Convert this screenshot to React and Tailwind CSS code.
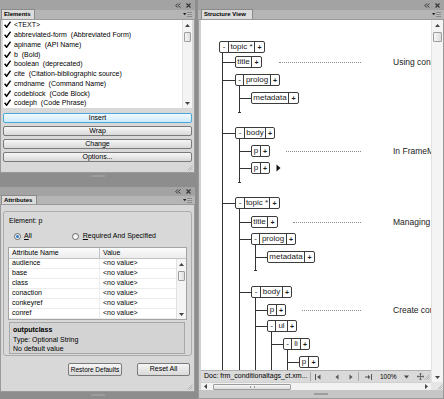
import React from "react";

const elements = [
  "<TEXT>",
  "abbreviated-form  (Abbreviated Form)",
  "apiname  (API Name)",
  "b  (Bold)",
  "boolean  (deprecated)",
  "cite  (Citation-bibliographic source)",
  "cmdname  (Command Name)",
  "codeblock  (Code Block)",
  "codeph  (Code Phrase)",
];

const attrs = ["audience", "base", "class", "conaction", "conkeyref", "conref"];

const OX = 201;
const OY = 20;

const nodes = [
  { x: 219, y: 41, parts: [["-", 8], ["topic *", 26], ["+", 10]] },
  { x: 235, y: 56, parts: [["title", 15], ["+", 10]] },
  { x: 235, y: 74, parts: [["-", 7], ["prolog", 27], ["+", 9]] },
  { x: 251, y: 92, parts: [["metadata", 36], ["+", 10]] },
  { x: 235, y: 127, parts: [["-", 8], ["body", 21], ["+", 9]] },
  { x: 251, y: 145, parts: [["p", 8], ["+", 9]] },
  { x: 251, y: 162, parts: [["p", 8], ["+", 9]] },
  { x: 235, y: 197, parts: [["-", 8], ["topic *", 25], ["+", 10]] },
  { x: 251, y: 216, parts: [["title", 15], ["+", 10]] },
  { x: 251, y: 233, parts: [["-", 7], ["prolog", 27], ["+", 9]] },
  { x: 267, y: 251, parts: [["metadata", 36], ["+", 10]] },
  { x: 251, y: 286, parts: [["-", 8], ["body", 22], ["+", 9]] },
  { x: 267, y: 304, parts: [["p", 8], ["+", 9]] },
  { x: 267, y: 320, parts: [["-", 7], ["ul", 12], ["+", 9]] },
  { x: 283, y: 338, parts: [["-", 7], ["li", 9], ["+", 9]] },
  { x: 299, y: 356, parts: [["p", 8], ["+", 10]] },
];

const vlines = [
  [222, 53, 372, false],
  [239, 86, 112, true],
  [239, 139, 182, true],
  [239, 209, 372, false],
  [255, 245, 270, true],
  [255, 298, 372, false],
  [271, 332, 372, false],
  [287, 350, 372, false],
];

const hlines = [
  [222, 235, 62],
  [222, 235, 80],
  [239, 251, 98],
  [222, 235, 133],
  [239, 251, 151],
  [239, 251, 168],
  [222, 235, 203],
  [239, 251, 222],
  [239, 251, 239],
  [255, 267, 257],
  [239, 251, 292],
  [255, 267, 310],
  [255, 267, 326],
  [271, 283, 344],
  [287, 299, 362],
];

const dotted = [
  [279, 361, 62, "Using conditional text"],
  [286, 361, 151, "In FrameMaker, conditional"],
  [293, 361, 222, "Managing conditional tags"],
  [302, 361, 310, "Create conditional tags"],
];

function Check() {
  return (
    <svg width="7" height="7" viewBox="0 0 7 7" className="shrink-0">
      <path d="M0.6 3.8 L2.6 6.2 L6.6 0.6" stroke="#000" strokeWidth="1.5" fill="none" />
    </svg>
  );
}

function DblArrow() {
  return (
    <svg width="6" height="5" viewBox="0 0 6 5">
      <path d="M2.8 0.5 L0.8 2.5 L2.8 4.5 M5.3 0.5 L3.3 2.5 L5.3 4.5" stroke="#333" fill="none" strokeWidth="1" />
    </svg>
  );
}

function CloseX() {
  return (
    <svg width="5" height="5" viewBox="0 0 5 5">
      <path d="M0.5 0.5 L4.5 4.5 M4.5 0.5 L0.5 4.5" stroke="#333" strokeWidth="1.1" />
    </svg>
  );
}

function MenuIcon() {
  return (
    <svg width="9" height="5" viewBox="0 0 9 5">
      <path d="M0 1 L3.4 1 L1.7 3.2 Z" fill="#222" />
      <rect x="4" y="0" width="5" height="5" fill="#8a8a8a" />
      <path d="M4 1.5 H9 M4 3.5 H9" stroke="#c8c8c8" strokeWidth="0.8" />
    </svg>
  );
}

function Grip() {
  return (
    <svg width="6" height="6" viewBox="0 0 6 6">
      <path d="M5.5 0.5 L0.5 5.5 M5.5 2.5 L2.5 5.5 M5.5 4.5 L4.5 5.5" stroke="#a8a8a8" strokeWidth="0.8" />
    </svg>
  );
}

function UpArrow() {
  return (
    <svg width="5" height="3" viewBox="0 0 5 3">
      <path d="M0 3 L2.5 0 L5 3 Z" fill="#444" />
    </svg>
  );
}

function DownArrow() {
  return (
    <svg width="5" height="3" viewBox="0 0 5 3">
      <path d="M0 0 L2.5 3 L5 0 Z" fill="#444" />
    </svg>
  );
}

function VScroll() {
  return (
    <div className="h-full flex flex-col bg-[#f4f4f4] border-l border-[#e2e2e2]">
      <div className="h-[10px] flex items-center justify-center">
        <UpArrow />
      </div>
      <div className="mt-[2px] mx-[1px] h-[10px] rounded-[1px] border border-[#9d9d9d] bg-gradient-to-r from-[#f6f6f6] to-[#dedede]" />
      <div className="flex-1" />
      <div className="h-[10px] flex items-center justify-center">
        <DownArrow />
      </div>
    </div>
  );
}

function Header({ label, tabClass }) {
  return (
    <>
      <div className="h-[10px] bg-[#a3a3a3] flex items-center justify-end gap-[5px] pr-[4px] shrink-0">
        <DblArrow />
        <CloseX />
      </div>
      <div className="h-[10px] bg-[#b5b5b5] flex items-end shrink-0 border-b border-[#9a9a9a]">
        <div className={tabClass}>{label}</div>
        <div className="ml-auto mr-[3px] self-center flex">
          <MenuIcon />
        </div>
      </div>
    </>
  );
}

function Button({ children, active, className }) {
  const base = "flex items-center justify-center whitespace-nowrap text-[#000] rounded-[2px] border bg-gradient-to-b ";
  const tone = active
    ? "border-[#4aa9dc] from-[#f2fafe] to-[#cdeafb]"
    : "border-[#7a7a7a] from-[#f6f6f6] to-[#d9d9d9]";
  return <div className={base + tone + " " + (className || "")}>{children}</div>;
}

function Handle({ className }) {
  return (
    <div className={"flex items-center justify-center shrink-0 " + className}>
      <div className="w-[14px] h-[2px] bg-[#b4b4b4] border-y border-[#9c9c9c]" />
    </div>
  );
}

function ElementsPanel() {
  return (
    <div className="h-[173px] flex flex-col shrink-0">
      <Header
        label="Elements"
        tabClass="w-[34px] h-[10px] ml-[1px] bg-[#dcdcdc] border-t border-x border-[#8a8a8a] text-[6px] font-bold leading-[9px] pl-[2px]"
      />
      <div className="flex-1 relative bg-[#d8d8d8] border-x border-b border-[#9a9a9a] px-[2px] flex flex-col">
        <div className="h-[88px] bg-white flex shrink-0">
          <div className="flex-1 flex flex-col">
            {elements.map((t) => (
              <div key={t} className="h-[9.75px] flex items-center gap-[3px] pl-[1px] text-[7px] leading-none whitespace-pre text-[#000]">
                <Check />
                <span>{t}</span>
              </div>
            ))}
          </div>
          <div className="w-[10px]">
            <VScroll />
          </div>
        </div>
        <div className="mt-[5px] flex flex-col gap-[3px]">
          <Button active className="h-[10px] text-[7px]">Insert</Button>
          <Button className="h-[10px] text-[7px]">Wrap</Button>
          <Button className="h-[10px] text-[7px]">Change</Button>
          <Button className="h-[10px] text-[7px]">Options...</Button>
        </div>
        <div className="absolute right-[1px] bottom-[1px] flex">
          <Grip />
        </div>
      </div>
    </div>
  );
}

function Radio({ on }) {
  return (
    <div className="w-[7px] h-[7px] rounded-full border border-[#6b6b6b] bg-gradient-to-b from-[#e8e8e8] to-[#ffffff] flex items-center justify-center shrink-0">
      {on ? <div className="w-[3px] h-[3px] rounded-full bg-[#2c78c8]" /> : null}
    </div>
  );
}

function AttributesPanel() {
  return (
    <div className="h-[205px] flex flex-col shrink-0">
      <div className="h-[9px] bg-[#a3a3a3] flex items-center justify-end gap-[5px] pr-[4px] shrink-0">
        <DblArrow />
        <CloseX />
      </div>
      <div className="h-[9px] bg-[#b5b5b5] flex items-end shrink-0 border-b border-[#9a9a9a]">
        <div className="w-[36px] h-[9px] ml-[1px] bg-[#dcdcdc] border-t border-x border-[#8a8a8a] text-[6px] font-bold leading-[8px] pl-[2px]">
          Attributes
        </div>
        <div className="ml-auto mr-[3px] self-center flex">
          <MenuIcon />
        </div>
      </div>
      <div className="flex-1 relative bg-[#d8d8d8] border-x border-b border-[#9a9a9a] px-[2px] flex flex-col">
        <div className="mt-[6px] h-[145px] border border-[#acacac] rounded-[3px] px-[4px] flex flex-col shrink-0">
          <div className="mt-[4px] h-[10px] flex items-center pl-[1px] text-[7px] text-[#000]">Element: p</div>
          <div className="mt-[5px] h-[10px] flex items-center text-[7px] text-[#000]">
            <div className="ml-[6px]">
              <Radio on />
            </div>
            <span className="ml-[3px]">
              <span className="underline">A</span>ll
            </span>
            <div className="ml-[40px]">
              <Radio />
            </div>
            <span className="ml-[4px]">
              <span className="underline">R</span>equired And Specified
            </span>
          </div>
          <div className="mt-[6px] border border-[#a4a4a4] bg-white flex flex-col shrink-0">
            <div className="h-[11px] flex text-[7px] text-[#000] bg-gradient-to-b from-[#fbfbfb] to-[#ececec] border-b border-[#c4c4c4]">
              <div className="w-[91px] pl-[3px] flex items-center border-r border-[#c4c4c4]">Attribute Name</div>
              <div className="flex-1 pl-[3px] flex items-center">Value</div>
            </div>
            <div className="flex h-[60px]">
              <div className="flex-1 flex flex-col">
                {attrs.map((a) => (
                  <div key={a} className="h-[10px] flex text-[7px] text-[#000] border-b border-[#ececec]">
                    <div className="w-[91px] pl-[3px] flex items-center border-r border-[#ececec]">{a}</div>
                    <div className="flex-1 pl-[3px] flex items-center">&lt;no value&gt;</div>
                  </div>
                ))}
              </div>
              <div className="w-[10px]">
                <VScroll />
              </div>
            </div>
          </div>
          <div className="mt-[2px] ml-[1px] mr-[2px] h-[32px] border border-[#a8a8a8] bg-[#d3d3d3] px-[3px] pt-[2px] flex flex-col text-[7px] text-[#000] leading-[9.5px]">
            <span className="font-bold">outputclass</span>
            <span>Type: Optional String</span>
            <span>No default value</span>
          </div>
        </div>
        <div className="mt-[7px] flex justify-end gap-[15px] pr-[2px]">
          <Button className="h-[13px] w-[54px] text-[6.5px]">Restore Defaults</Button>
          <Button className="h-[13px] w-[53px] text-[7px]">Reset All</Button>
        </div>
        <div className="absolute right-[1px] bottom-[1px] flex">
          <Grip />
        </div>
      </div>
    </div>
  );
}

function TreeNode({ n }) {
  return (
    <div
      className="absolute h-[12px] flex border border-[#3c3c3c] rounded-[2px] bg-white text-[8px] leading-none text-[#1a1a1a]"
      style={{ left: n.x - OX, top: n.y - OY }}
    >
      {n.parts.map(([t, w], i) => (
        <div
          key={i}
          className={
            "h-full flex items-center justify-center whitespace-pre " +
            (i > 0 ? "border-l border-[#3c3c3c] " : "") +
            (t === "+" ? "font-bold text-[7px]" : "")
          }
          style={{ width: w }}
        >
          {t}
        </div>
      ))}
    </div>
  );
}

function Canvas() {
  return (
    <div className="flex-1 bg-white relative overflow-hidden">
      {vlines.map(([x, y1, y2, tick], i) => (
        <React.Fragment key={"v" + i}>
          <div className="absolute w-[1px] bg-[#333]" style={{ left: x - OX, top: y1 - OY, height: y2 - y1 }} />
          {tick ? (
            <div className="absolute w-[3px] h-[1px] bg-[#333]" style={{ left: x - OX - 1, top: y2 - OY }} />
          ) : null}
        </React.Fragment>
      ))}
      {hlines.map(([x1, x2, y], i) => (
        <div key={"h" + i} className="absolute h-[1px] bg-[#333]" style={{ left: x1 - OX, top: y - OY, width: x2 - x1 }} />
      ))}
      {dotted.map(([x1, x2, y, t], i) => (
        <React.Fragment key={"d" + i}>
          <div className="absolute border-t border-dotted border-[#8a8a8a]" style={{ left: x1 - OX, top: y - OY, width: x2 - x1 }} />
          <div
            className="absolute text-[8.5px] leading-none text-[#222] whitespace-nowrap"
            style={{ left: 393 - OX, top: y - OY - 4 }}
          >
            {t}
          </div>
        </React.Fragment>
      ))}
      {nodes.map((n, i) => (
        <TreeNode key={i} n={n} />
      ))}
      <svg className="absolute" style={{ left: 276 - OX, top: 164 - OY }} width="5" height="8" viewBox="0 0 5 8">
        <path d="M0.5 0.5 L4.5 4 L0.5 7.5 Z" fill="#111" />
      </svg>
    </div>
  );
}

function StatusBar() {
  return (
    <div className="h-[12px] bg-[#dadada] border-t border-[#b0b0b0] flex items-center text-[7px] text-[#000] shrink-0">
      <div className="w-[109px] pl-[3px] whitespace-nowrap overflow-hidden">Doc: frm_conditionaltags_ct.xm...</div>
      <div className="w-[1px] h-[9px] bg-[#a8a8a8]" />
      <svg className="ml-[4px]" width="6" height="6" viewBox="0 0 6 6">
        <path d="M0.5 0 V6" stroke="#555" strokeWidth="1" />
        <path d="M5.5 0.5 L2 3 L5.5 5.5 Z" fill="#555" />
      </svg>
      <svg className="ml-[14px]" width="4" height="6" viewBox="0 0 4 6">
        <path d="M3.5 0.5 L0.5 3 L3.5 5.5 Z" fill="#555" />
      </svg>
      <svg className="ml-[10px]" width="4" height="6" viewBox="0 0 4 6">
        <path d="M0.5 0.5 L3.5 3 L0.5 5.5 Z" fill="#555" />
      </svg>
      <div className="ml-[5px] w-[1px] h-[9px] bg-[#a8a8a8]" />
      <svg className="ml-[6px]" width="7" height="6" viewBox="0 0 7 6">
        <path d="M0 3 H4" stroke="#555" strokeWidth="1" />
        <path d="M3 0.8 L5.3 3 L3 5.2 Z" fill="#555" />
        <path d="M6.5 0 V6" stroke="#555" strokeWidth="1" />
      </svg>
      <span className="ml-[8px] text-[6.5px]">100%</span>
      <svg className="ml-[7px]" width="5" height="4" viewBox="0 0 5 4">
        <path d="M0 0.5 L5 0.5 L2.5 3.5 Z" fill="#444" />
      </svg>
      <svg className="ml-[8px]" width="7" height="7" viewBox="0 0 7 7">
        <path d="M3.5 0 V7 M0 3.5 H7" stroke="#666" strokeWidth="1" />
        <path d="M2.3 1.2 L3.5 0 L4.7 1.2 M2.3 5.8 L3.5 7 L4.7 5.8 M1.2 2.3 L0 3.5 L1.2 4.7 M5.8 2.3 L7 3.5 L5.8 4.7" stroke="#666" strokeWidth="0.8" fill="none" />
      </svg>
      <div className="ml-auto mr-[1px] flex">
        <Grip />
      </div>
    </div>
  );
}

function HScroll() {
  return (
    <div className="h-[8px] bg-[#f2f2f2] border-t border-[#d0d0d0] flex items-center shrink-0">
      <svg className="ml-[3px]" width="3" height="5" viewBox="0 0 3 5">
        <path d="M3 0 L0 2.5 L3 5 Z" fill="#444" />
      </svg>
      <div className="ml-[6px] w-[78px] h-[6px] rounded-[1px] border border-[#9d9d9d] bg-gradient-to-b from-[#f7f7f7] to-[#dcdcdc] flex items-center justify-center">
        <div className="w-[5px] h-[2px] border-x border-[#9a9a9a]" />
      </div>
      <div className="flex-1" />
      <svg className="mr-[3px]" width="3" height="5" viewBox="0 0 3 5">
        <path d="M0 0 L3 2.5 L0 5 Z" fill="#444" />
      </svg>
    </div>
  );
}

function StructurePanel() {
  return (
    <div className="w-[246px] flex flex-col shrink-0">
      <Header
        label="Structure View"
        tabClass="w-[52px] h-[10px] ml-[3px] bg-[#dcdcdc] border-t border-x border-[#8a8a8a] text-[6px] font-bold leading-[9px] pl-[2px] whitespace-nowrap"
      />
      <div className="h-[370px] flex bg-[#d0d0d0] border-x border-[#9a9a9a] pl-[2px] shrink-0">
        <div className="flex-1 flex flex-col">
          <Canvas />
          <StatusBar />
          <HScroll />
        </div>
        <div className="w-[12px] flex flex-col">
          <div className="flex-1">
            <VScroll />
          </div>
          <div className="h-[8px] bg-[#e6e6e6] flex items-end justify-end">
            <Grip />
          </div>
        </div>
      </div>
      <div className="h-[9px] bg-[#c6c6c6] border-x border-b border-[#9a9a9a] flex items-center justify-center shrink-0">
        <div className="w-[14px] h-[2px] bg-[#b4b4b4] border-y border-[#9c9c9c]" />
      </div>
    </div>
  );
}

export default function App() {
  return (
    <div className="w-[444px] h-[399px] bg-[#8d8d8d] flex overflow-hidden font-['Liberation_Sans',Arial,sans-serif] text-[#000]">
      <div className="w-[195px] flex flex-col shrink-0">
        <ElementsPanel />
        <Handle className="h-[5px]" />
        <div className="h-[9px] shrink-0" />
        <AttributesPanel />
        <Handle className="h-[5px]" />
      </div>
      <div className="w-[3px] shrink-0" />
      <StructurePanel />
    </div>
  );
}
